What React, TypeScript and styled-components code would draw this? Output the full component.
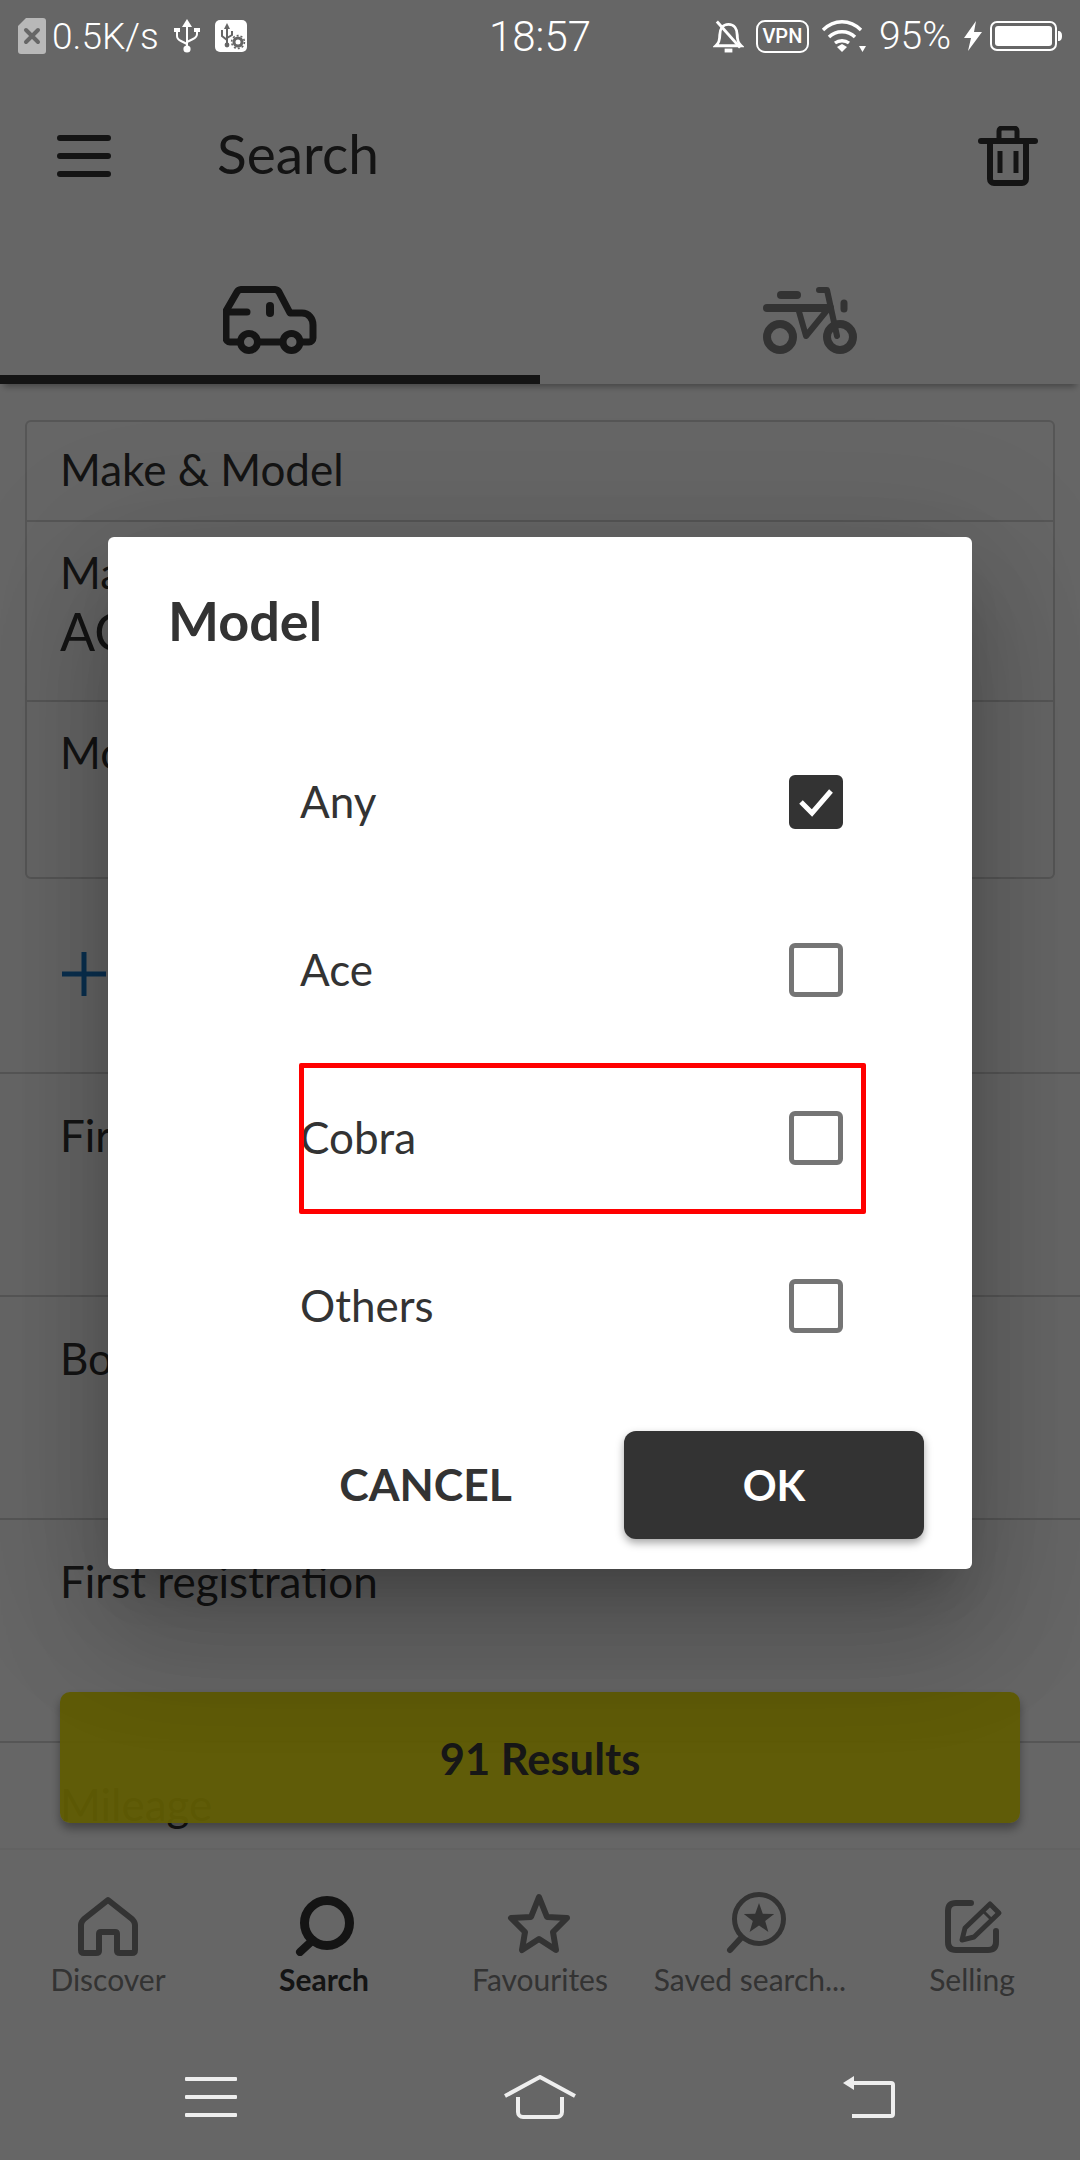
import React from 'react';
import styled, { createGlobalStyle } from 'styled-components';

const GlobalStyle = createGlobalStyle`
  html, body {
    margin: 0;
    padding: 0;
    background: #666;
  }
  * {
    box-sizing: border-box;
  }
`;

const FONT = `Lato, "Open Sans", "Liberation Sans", sans-serif`;

const Screen = styled.div`
  position: relative;
  width: 1080px;
  height: 2160px;
  overflow: hidden;
  display: flex;
  flex-direction: column;
  background: #fff;
  font-family: ${FONT};
  color: #333;
`;

const StatusBar = styled.div`
  position: relative;
  z-index: 3;
  height: 72px;
  flex: none;
  display: grid;
  grid-template-columns: 1fr auto 1fr;
  align-items: center;
  padding: 0 18px;
  background: #666;
  color: #fff;
  font-family: Roboto, "Liberation Sans", sans-serif;
  font-size: 37px;
  font-weight: 300;
`;

const StatusGroup = styled.div<{ $end?: boolean }>`
  display: flex;
  align-items: center;
  justify-content: ${(p) => (p.$end ? 'flex-end' : 'flex-start')};
  gap: ${(p) => (p.$end ? '12px' : '15px')};
`;

const Speed = styled.span`
  margin-left: -9px;
`;

const Battery = styled.span`
  font-size: 39px;
`;

const Clock = styled.span`
  font-size: 42px;
`;

const AppBar = styled.div`
  height: 168px;
  flex: none;
  display: flex;
  align-items: center;
  padding: 0 42px 0 57px;
`;

const AppTitle = styled.h1`
  flex: 1;
  margin: 0 0 0 106px;
  padding-bottom: 6px;
  font-size: 55px;
  font-weight: 400;
  line-height: 1;
`;

const Tabs = styled.div`
  height: 144px;
  flex: none;
  display: flex;
  position: relative;
  z-index: 1;
  box-shadow: 0 7px 6px -4px rgba(0, 0, 0, 0.3);
`;

const Tab = styled.div<{ $active?: boolean }>`
  flex: 1;
  display: flex;
  justify-content: center;
  padding-top: 46px;
  border-bottom: 9px solid ${(p) => (p.$active ? '#333' : 'transparent')};
`;

const Content = styled.div`
  flex: 1;
  min-height: 0;
  overflow: hidden;
  padding-top: 36px;
`;

const Card = styled.div`
  margin: 0 25px;
  border: 2px solid #d6d6d6;
  border-radius: 6px;
`;

const CardRow = styled.div<{ $height: number; $center?: boolean }>`
  height: ${(p) => p.$height}px;
  padding: ${(p) => (p.$center ? '0 33px 5px' : '25px 33px 0')};
  display: flex;
  flex-direction: column;
  justify-content: ${(p) => (p.$center ? 'center' : 'flex-start')};
  border-top: 2px solid #d6d6d6;
  &:first-child {
    border-top: 0;
  }
`;

const Label = styled.div`
  font-size: 44px;
  line-height: 50px;
`;

const Value = styled.div`
  font-size: 52px;
  line-height: 68px;
`;

const AddRow = styled.div`
  height: 193px;
  display: flex;
  align-items: center;
  padding: 0 0 4px 62px;
`;

const FilterRow = styled.div`
  height: 223px;
  padding: 36px 60px 0;
  border-top: 2px solid #d6d6d6;
`;

const ResultsButton = styled.div`
  position: absolute;
  left: 60px;
  top: 1692px;
  width: 960px;
  height: 131px;
  z-index: 1;
  display: flex;
  align-items: center;
  justify-content: center;
  border-radius: 10px;
  background: rgba(239, 229, 8, 0.95);
  font-size: 43.5px;
  font-weight: 700;
  color: #3a3a3a;
  box-shadow: 0 6px 10px rgba(0, 0, 0, 0.35);
`;

const BottomNav = styled.div`
  height: 192px;
  flex: none;
  display: grid;
  grid-template-columns: repeat(5, 216px);
  padding-top: 42px;
  background: #fff;
  border-top: 2px solid #f6f6f6;
  position: relative;
  z-index: 1;
`;

const NavItem = styled.div<{ $active?: boolean }>`
  display: flex;
  flex-direction: column;
  align-items: center;
  gap: 5px;
  font-size: 30px;
  line-height: 36px;
  white-space: nowrap;
  color: ${(p) => (p.$active ? '#333' : '#808080')};
  font-weight: ${(p) => (p.$active ? 700 : 400)};
`;

const NavLabel = styled.span<{ $nudge?: number }>`
  margin-right: ${(p) => p.$nudge ?? 0}px;
`;

const NavIcon = styled.svg`
  width: 72px;
  height: 64px;
  display: block;
`;

const SystemNav = styled.div`
  height: 120px;
  flex: none;
  position: relative;
  z-index: 3;
  display: grid;
  grid-template-columns: repeat(3, 1fr);
  justify-items: center;
  align-items: center;
  padding: 0 46px 6px;
  background: #666;
`;

const Scrim = styled.div`
  position: absolute;
  inset: 0;
  z-index: 2;
  display: flex;
  justify-content: center;
  align-items: flex-start;
  padding-top: 537px;
  background: rgba(0, 0, 0, 0.6);
`;

const Dialog = styled.div`
  width: 864px;
  height: 1032px;
  display: flex;
  flex-direction: column;
  border-radius: 6px;
  background: #fff;
  box-shadow: 0 33px 45px -21px rgba(0, 0, 0, 0.2), 0 72px 114px 9px rgba(0, 0, 0, 0.14),
    0 27px 138px 24px rgba(0, 0, 0, 0.12);
`;

const DialogTitle = styled.h2`
  height: 181px;
  flex: none;
  margin: 0;
  padding: 54px 0 0 60px;
  font-size: 54px;
  line-height: 60px;
  font-weight: 700;
  color: #333;
`;

const OptionRow = styled.div`
  position: relative;
  height: 168px;
  flex: none;
  display: flex;
  align-items: center;
  justify-content: space-between;
  padding: 0 129px 0 192px;
`;

const OptionLabel = styled.span`
  font-size: 44px;
  line-height: 50px;
  padding-bottom: 2px;
`;

const CheckBox = styled.span<{ $checked?: boolean }>`
  width: 54px;
  height: 54px;
  display: flex;
  align-items: center;
  justify-content: center;
  border-radius: 6px;
  border: 5px solid ${(p) => (p.$checked ? '#333' : '#757575')};
  background: ${(p) => (p.$checked ? '#333' : '#fff')};
`;

const Highlight = styled.div`
  position: absolute;
  left: 191px;
  top: 9px;
  width: 567px;
  height: 151px;
  border: 5px solid #ff0000;
  border-radius: 2px;
`;

const DialogFooter = styled.div`
  margin-top: 41px;
  padding-right: 48px;
  display: flex;
  justify-content: flex-end;
  align-items: center;
`;

const CancelButton = styled.span`
  margin-right: 112px;
  padding-bottom: 3px;
  font-size: 44.5px;
  font-weight: 700;
  color: #333;
`;

const OkButton = styled.span`
  width: 300px;
  height: 108px;
  display: flex;
  align-items: center;
  justify-content: center;
  border-radius: 12px;
  background: #333;
  color: #fff;
  font-size: 42px;
  font-weight: 700;
  box-shadow: 0 4px 8px rgba(0, 0, 0, 0.35);
`;

const BoltWrap = styled.span`
  display: flex;
  margin: 0 -4px 0 1px;
`;

const VpnBadge = styled.span`
  width: 53px;
  height: 33px;
  display: flex;
  align-items: center;
  justify-content: center;
  border: 2.5px solid #fff;
  border-radius: 9px;
  font-size: 20px;
  font-weight: 500;
`;

const SimIcon = () => (
  <svg width="28" height="36" viewBox="0 0 28 36">
    <path d="M8 0h17a3 3 0 0 1 3 3v30a3 3 0 0 1-3 3H3a3 3 0 0 1-3-3V8z" fill="#b8b8b8" />
    <path d="M8 12l12 12M20 12L8 24" stroke="#666" strokeWidth="4" strokeLinecap="round" />
  </svg>
);

const UsbIcon = () => (
  <svg width="26" height="34" viewBox="0 0 26 34" fill="none">
    <path d="M13 0l5 8H8z" fill="#fff" />
    <circle cx="13" cy="30" r="3.6" fill="#fff" />
    <path d="M13 6v24M3 12v5c0 3 2 4 4 5l6 3M23 12v3c0 3-2 4-4 5l-6 3" stroke="#fff" strokeWidth="2" />
    <rect x="0" y="9" width="6" height="4" fill="#fff" />
    <rect x="20" y="9" width="6" height="4" fill="#fff" />
  </svg>
);

const UsbSettingsIcon = () => (
  <svg width="32" height="32" viewBox="0 0 32 32">
    <rect width="32" height="32" rx="5" fill="#fff" />
    <path d="M12 3l3 6H9z" fill="#666" />
    <path d="M12 7v19M7 10v6l5 4M17 11v4l-5 3" stroke="#666" strokeWidth="2" fill="none" />
    <circle cx="12" cy="25" r="2.4" fill="#666" />
    <circle cx="23" cy="22" r="4" fill="none" stroke="#666" strokeWidth="3" />
    <circle cx="23" cy="22" r="6.4" fill="none" stroke="#666" strokeWidth="1.6" strokeDasharray="2 2" />
  </svg>
);

const BellOffIcon = () => (
  <svg width="31" height="36" viewBox="0 0 32 36" fill="none" stroke="#fff" strokeWidth="3">
    <path d="M3 28c3-3 4-5 4-11 0-6 3-11 9-11s9 5 9 11c0 6 1 8 4 11z" />
    <path d="M4 3l24 27" />
    <path d="M12 33h8" strokeWidth="4" />
  </svg>
);

const WifiIcon = () => (
  <svg width="46" height="34" viewBox="0 0 46 34" fill="none" stroke="#fff" strokeWidth="3.4">
    <path d="M2 11c11-11 27-11 38 0" />
    <path d="M8 18c7-7 19-7 26 0" />
    <path d="M14 24c4-3 10-3 14 0" />
    <path d="M16 28l5-3 5 3-5 5z" fill="#fff" stroke="none" />
    <path d="M38 27h7l-3.500 6z" fill="#fff" stroke="none" />
  </svg>
);

const BoltIcon = () => (
  <svg width="18" height="30" viewBox="0 0 18 30">
    <path d="M12 0L0 17h7L4 30 18 11h-8z" fill="#fff" />
  </svg>
);

const BatteryIcon = () => (
  <svg width="72" height="30" viewBox="0 0 72 30">
    <rect x="1" y="1" width="65" height="28" rx="6" fill="none" stroke="#fff" strokeWidth="2" />
    <rect x="5" y="5" width="57" height="20" rx="3" fill="#fff" />
    <path d="M68 10c3 0 4 2 4 5s-1 5-4 5z" fill="#fff" />
  </svg>
);

const MenuIcon = () => (
  <svg width="54" height="42" viewBox="0 0 54 42" fill="#333">
    <rect width="54" height="6" y="0" rx="3" />
    <rect width="54" height="6" y="18" rx="3" />
    <rect width="54" height="6" y="36" rx="3" />
  </svg>
);

const TrashIcon = () => (
  <svg width="60" height="60" viewBox="0 0 60 60" fill="none" stroke="#333" strokeWidth="5">
    <path d="M3 15h54" strokeWidth="6" strokeLinecap="round" />
    <path d="M21 14V5a3 3 0 0 1 3-3h12a3 3 0 0 1 3 3v9" />
    <path d="M12 15v38a4 4 0 0 0 4 4h28a4 4 0 0 0 4-4V15" strokeWidth="6" />
    <path d="M22 25v22M38 25v22" />
  </svg>
);

const CarIcon = () => (
  <svg width="94" height="69" viewBox="0 0 94 69" fill="none" stroke="#333" strokeWidth="7" strokeLinecap="round" strokeLinejoin="round">
    <path d="M15 56H7a4 4 0 0 1-4-4V25L14 6a5 5 0 0 1 4-2.500h34a5 5 0 0 1 4 2.500l11 21h12c7 0 11 6 11 12v13a4 4 0 0 1-4 4h-7" />
    <path d="M36 56h22" />
    <path d="M4 26h20" />
    <path d="M47 20v7" strokeWidth="8" />
    <circle cx="26" cy="56" r="8.500" />
    <circle cx="68.500" cy="56" r="8.500" />
  </svg>
);

const BikeIcon = () => (
  <svg width="94" height="69" viewBox="0 0 94 69" fill="none" stroke="#808080" strokeWidth="7" strokeLinecap="round" strokeLinejoin="round">
    <circle cx="17" cy="51" r="13" strokeWidth="8" />
    <circle cx="77" cy="51" r="13" strokeWidth="8" />
    <path d="M18 9h16" strokeWidth="8" />
    <path d="M4 22h63" strokeWidth="8" />
    <path d="M35 22l8 28 22-27" strokeWidth="6" />
    <path d="M56 4h8l10 46" strokeWidth="6" />
    <path d="M81 17v6" strokeWidth="7" />
  </svg>
);

const Plus = () => (
  <svg width="44" height="44" viewBox="0 0 44 44">
    <path d="M22 0v44M0 22h44" stroke="#1978c8" strokeWidth="5" />
  </svg>
);

const Check = () => (
  <svg width="36" height="30" viewBox="0 0 36 30" fill="none">
    <path d="M3 15l11 11L33 4" stroke="#fff" strokeWidth="5" />
  </svg>
);

const HomeNav = () => (
  <NavIcon viewBox="0 0 72 64" fill="none" stroke="#808080" strokeWidth="6" strokeLinejoin="round">
    <path d="M36 8L12 27q-3 3-3 6v25q0 3 3 3h12q3 0 3-2V42q0-2 2-2h14q2 0 2 2v17q0 2 3 2h12q3 0 3-3V33q0-3-3-6z" />
  </NavIcon>
);

const SearchNav = () => (
  <NavIcon viewBox="0 0 72 64" fill="none" stroke="#333" strokeWidth="9" strokeLinecap="round">
    <circle cx="39" cy="31" r="22.500" />
    <path d="M25 48L12 60" strokeWidth="8" />
  </NavIcon>
);

const StarNav = () => (
  <NavIcon viewBox="0 0 72 64" fill="none" stroke="#808080" strokeWidth="6" strokeLinejoin="round">
    <path d="M35 5l8 20 20 1-14 14 3 18-17-11-17 11 3-18L7 26l20-1z" />
  </NavIcon>
);

const SavedNav = () => (
  <NavIcon viewBox="0 0 72 64">
    <circle cx="39" cy="27" r="24.500" fill="none" stroke="#808080" strokeWidth="5" />
    <path
      d="M39 11l3.800 10.700 11.400.400-9 6.900 3.200 10.900L39 33.500l-9.400 6.400 3.200-10.900-9-6.900 11.400-.400z"
      fill="#808080"
    />
    <path d="M21 46L10 58" stroke="#808080" strokeWidth="6" strokeLinecap="round" />
  </NavIcon>
);

const EditNav = () => (
  <NavIcon viewBox="0 0 72 64" fill="none" stroke="#808080" strokeWidth="6" strokeLinecap="round" strokeLinejoin="round">
    <path d="M35 11H20q-8 0-8 8v31q0 8 8 8h32q8 0 8-8V39" />
    <path d="M26 48l3-12L54 12l9 9-25 24z" strokeWidth="5" />
    <path d="M47 19l9 9" strokeWidth="3" />
  </NavIcon>
);

const SystemMenu = () => (
  <svg width="52" height="40" viewBox="0 0 52 40" fill="#eee">
    <rect width="52" height="4" y="0" rx="1" />
    <rect width="52" height="4" y="18" rx="1" />
    <rect width="52" height="4" y="36" rx="1" />
  </svg>
);

const SystemHome = () => (
  <svg width="72" height="44" viewBox="0 0 72 44" fill="none" stroke="#eee" strokeWidth="4">
    <path d="M1 21L36 2l35 19" />
    <path d="M14 22v15a5 5 0 0 0 5 5h34a5 5 0 0 0 5-5V22" />
  </svg>
);

const SystemBack = () => (
  <svg width="52" height="42" viewBox="0 0 52 42" fill="none" stroke="#eee" strokeWidth="4">
    <path d="M5 7h43a2 2 0 0 1 2 2v29a2 2 0 0 1-2 2H9" />
    <path d="M0 7l11-7v14z" fill="#eee" stroke="none" />
  </svg>
);

const options = [
  { label: 'Any', checked: true },
  { label: 'Ace' },
  { label: 'Cobra', marked: true },
  { label: 'Others' },
];

const App = () => (
  <Screen>
    <GlobalStyle />
    <StatusBar>
      <StatusGroup>
        <SimIcon />
        <Speed>0.5K/s</Speed>
        <UsbIcon />
        <UsbSettingsIcon />
      </StatusGroup>
      <Clock>18:57</Clock>
      <StatusGroup $end>
        <BellOffIcon />
        <VpnBadge>VPN</VpnBadge>
        <WifiIcon />
        <Battery>95%</Battery>
        <BoltWrap>
          <BoltIcon />
        </BoltWrap>
        <BatteryIcon />
      </StatusGroup>
    </StatusBar>

    <AppBar>
      <MenuIcon />
      <AppTitle>Search</AppTitle>
      <TrashIcon />
    </AppBar>

    <Tabs>
      <Tab $active>
        <CarIcon />
      </Tab>
      <Tab>
        <BikeIcon />
      </Tab>
    </Tabs>

    <Content>
      <Card>
        <CardRow $height={98} $center>
          <Label>Make &amp; Model</Label>
        </CardRow>
        <CardRow $height={180}>
          <Label>Make</Label>
          <Value>AC</Value>
        </CardRow>
        <CardRow $height={177}>
          <Label>Model</Label>
        </CardRow>
      </Card>
      <AddRow>
        <Plus />
      </AddRow>
      <FilterRow>
        <Label>First</Label>
      </FilterRow>
      <FilterRow>
        <Label>Body</Label>
      </FilterRow>
      <FilterRow>
        <Label>First registration</Label>
      </FilterRow>
      <FilterRow>
        <Label>Mileage</Label>
      </FilterRow>
    </Content>

    <ResultsButton>91 Results</ResultsButton>

    <BottomNav>
      <NavItem>
        <HomeNav />
        <NavLabel>Discover</NavLabel>
      </NavItem>
      <NavItem $active>
        <SearchNav />
        <NavLabel>Search</NavLabel>
      </NavItem>
      <NavItem>
        <StarNav />
        <NavLabel>Favourites</NavLabel>
      </NavItem>
      <NavItem>
        <SavedNav />
        <NavLabel $nudge={12}>Saved search...</NavLabel>
      </NavItem>
      <NavItem>
        <EditNav />
        <NavLabel>Selling</NavLabel>
      </NavItem>
    </BottomNav>

    <SystemNav>
      <SystemMenu />
      <SystemHome />
      <SystemBack />
    </SystemNav>

    <Scrim>
      <Dialog>
        <DialogTitle>Model</DialogTitle>
        {options.map((option) => (
          <OptionRow key={option.label}>
            <OptionLabel>{option.label}</OptionLabel>
            <CheckBox $checked={option.checked}>{option.checked && <Check />}</CheckBox>
            {option.marked && <Highlight />}
          </OptionRow>
        ))}
        <DialogFooter>
          <CancelButton>CANCEL</CancelButton>
          <OkButton>OK</OkButton>
        </DialogFooter>
      </Dialog>
    </Scrim>
  </Screen>
);

export default App;
